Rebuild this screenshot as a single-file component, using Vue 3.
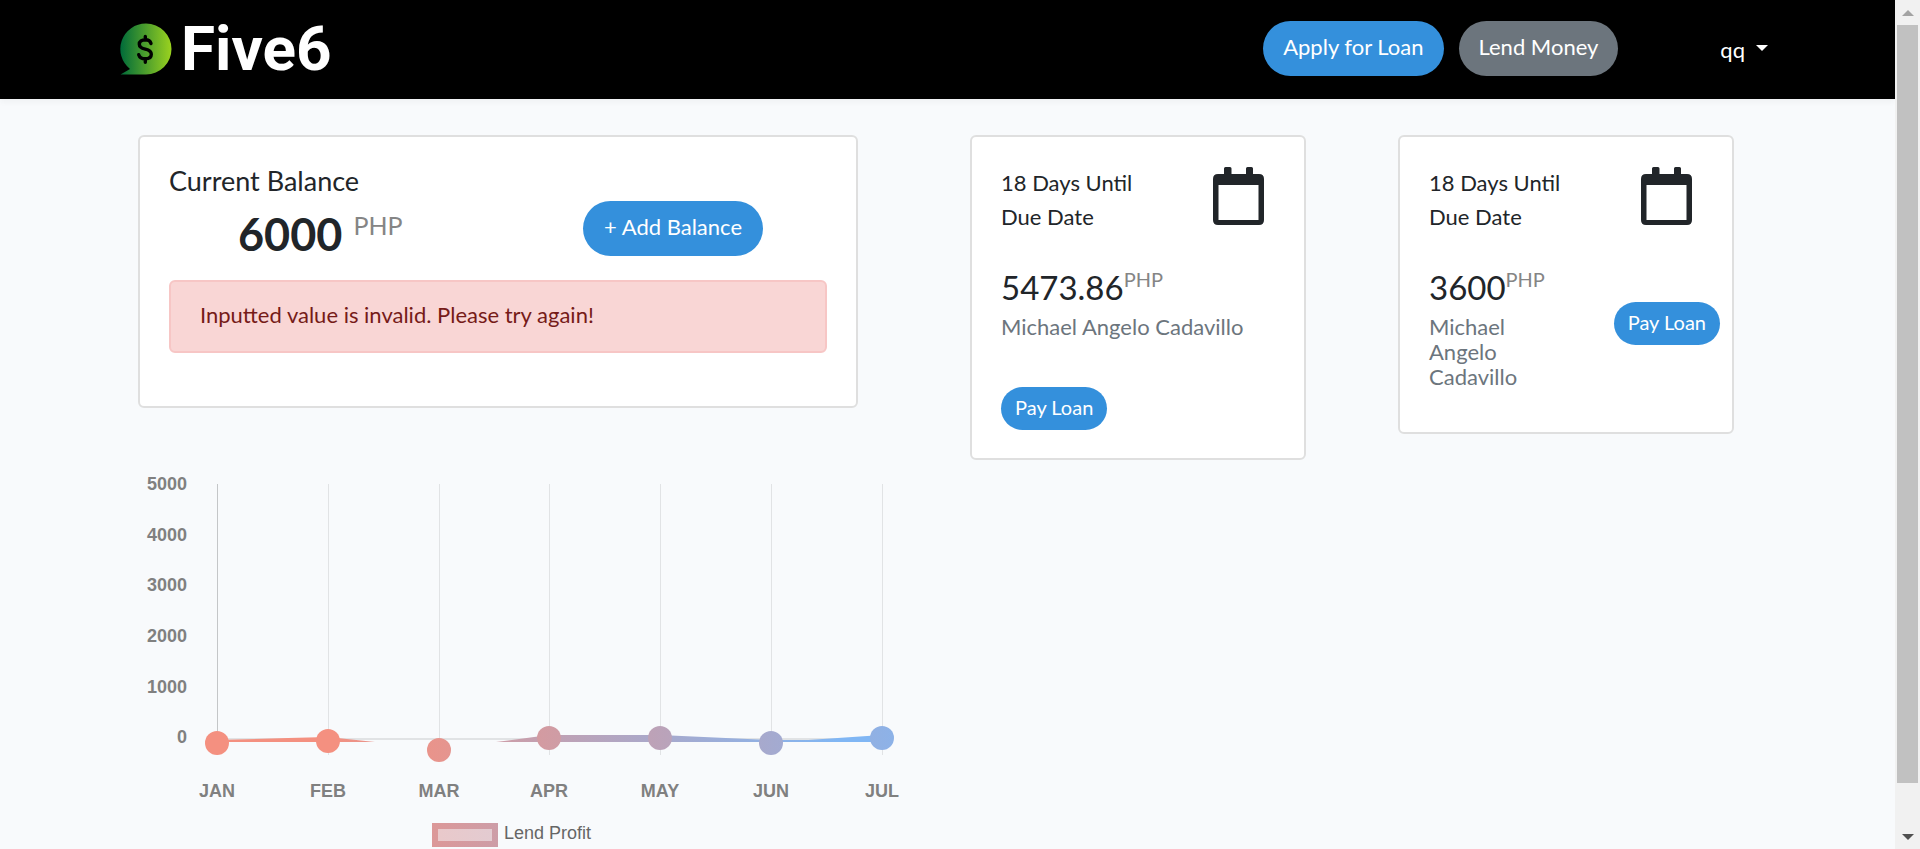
<script setup>
const loans = [
  { id: 1, days: 18, amount: '5473.86', lender: 'Michael Angelo Cadavillo', compact: false },
  { id: 2, days: 18, amount: '3600', lender: 'Michael Angelo Cadavillo', compact: true }
]

const ticks = [
  { label: '5000', y: 30 },
  { label: '4000', y: 81 },
  { label: '3000', y: 131 },
  { label: '2000', y: 182 },
  { label: '1000', y: 233 },
  { label: '0', y: 283 }
]

const points = [
  { label: 'JAN', x: 79, y: 289 },
  { label: 'FEB', x: 190, y: 287 },
  { label: 'MAR', x: 301, y: 296 },
  { label: 'APR', x: 411, y: 284 },
  { label: 'MAY', x: 522, y: 284 },
  { label: 'JUN', x: 633, y: 289 },
  { label: 'JUL', x: 744, y: 284 }
]
</script>

<template>
  <div class="shell">
    <div class="page">
      <header class="nav">
        <a class="brand" href="#" aria-label="Five6">
          <svg class="mark" viewBox="0 0 52 52" aria-hidden="true">
            <defs>
              <linearGradient id="leaf" x1="0" x2="1" y1="0" y2="0">
                <stop offset="0" stop-color="#006b3a" />
                <stop offset="1" stop-color="#9bd21f" />
              </linearGradient>
            </defs>
            <path fill="url(#leaf)" d="M26 .5A25.5 25.5 0 0 1 26 51.500H.5L10 46A25.500 25.500 0 0 1 26 .5Z" />
            <path
              d="M31 20.500C30.300 18 28.300 16.800 25.300 16.800C21.800 16.800 19.300 18.500 19.300 21.200C19.300 24 21.500 25.300 25.300 26.200C29.200 27.100 31.300 28.500 31.300 31.300C31.300 34.200 28.800 35.800 25.300 35.800C21.800 35.800 19.500 34.300 18.700 31.700M25.300 13.500V17M25.300 36V39.200"
              fill="none" stroke="#000" stroke-width="3.400" stroke-linecap="round" />
          </svg>
          <span class="word">Five6</span>
        </a>
        <nav class="actions">
          <button class="btn primary" type="button">Apply for Loan</button>
          <button class="btn muted" type="button">Lend Money</button>
          <button class="user" type="button">qq<i class="caret"></i></button>
        </nav>
      </header>

      <main class="board">
        <div class="overview">
          <section class="card balance">
            <h2>Current Balance</h2>
            <div class="funds">
              <div class="total"><strong>6000</strong><span>PHP</span></div>
              <button class="btn primary" type="button">+ Add Balance</button>
            </div>
            <p class="alert" role="alert">Inputted value is invalid. Please try again!</p>
          </section>

          <svg class="chart" viewBox="0 0 762 394" role="img" aria-label="Lend Profit by month">
            <defs>
              <linearGradient id="trend" gradientUnits="userSpaceOnUse" x1="187" x2="700" y1="0" y2="0">
                <stop offset="0" stop-color="#f49080" />
                <stop offset="1" stop-color="#80b6f4" />
              </linearGradient>
              <linearGradient id="dots" gradientUnits="userSpaceOnUse" x1="236" x2="819" y1="0" y2="0">
                <stop offset="0" stop-color="#f49080" />
                <stop offset="1" stop-color="#80b6f4" />
              </linearGradient>
            </defs>
            <rect v-for="(p, i) in points" :key="p.label" :x="p.x" y="30" width="1" height="271" :class="i ? 'rule' : 'axis'" />
            <rect x="79" y="284" width="665" height="2" class="zero" />
            <path
              fill="url(#trend)"
              d="M79 286L150 284L190 283L237 288H79ZM358 288L411 281H522L633 286L670 286L744 281V288Z" />
            <circle v-for="p in points" :key="p.label" :cx="p.x" :cy="p.y" r="12" fill="url(#dots)" />
            <text v-for="t in ticks" :key="t.label" x="49" :y="t.y + 6" text-anchor="end" class="tick">{{ t.label }}</text>
            <text v-for="p in points" :key="p.label" :x="p.x" y="343" text-anchor="middle" class="tick">{{ p.label }}</text>
            <rect x="297" y="372" width="60" height="18" fill="url(#trend)" fill-opacity=".5" />
            <rect x="297" y="372" width="60" height="18" fill="none" stroke="url(#trend)" stroke-width="6" />
            <text x="366" y="385" class="legend">Lend Profit</text>
          </svg>
        </div>

        <section v-for="loan in loans" :key="loan.id" class="card loan" :class="{ compact: loan.compact }">
          <div class="due">
            <h3>{{ loan.days }} Days Until Due Date</h3>
            <svg class="calendar" viewBox="0 0 51 58" aria-hidden="true">
              <path
                fill="#212529" fill-rule="evenodd"
                d="M11 7V1.500Q11 0 12.500 0H17Q18.500 0 18.500 1.500V7H33V1.500Q33 0 34.500 0H38.500Q40 0 40 1.500V7H46Q51 7 51 12V53Q51 58 46 58H5Q0 58 0 53V12Q0 7 5 7ZM5.500 18V53H45.500V18Z" />
            </svg>
          </div>
          <div class="pay">
            <div class="terms">
              <p class="amount">{{ loan.amount }}<span>PHP</span></p>
              <p class="lender">{{ loan.lender }}</p>
            </div>
            <button class="btn primary small" type="button">Pay Loan</button>
          </div>
        </section>
      </main>
    </div>

    <div class="scrollbar" aria-hidden="true">
      <svg viewBox="0 0 25 25"><path d="M7 16L13 10L19 16Z" fill="#a3a3a3" /></svg>
      <div class="thumb"></div>
      <svg class="down" viewBox="0 0 25 25"><path d="M7 10H19L13 16Z" fill="#505050" /></svg>
    </div>
  </div>
</template>

<style>
body {
  margin: 0;
  background: #f8fafc;
}
</style>

<style scoped>
.shell {
  display: grid;
  grid-template-columns: 1fr 25px;
  height: 100vh;
  overflow: hidden;
  color: #212529;
  font-family: Lato, "Liberation Sans", sans-serif;
  font-size: 22px;
}

.page {
  min-width: 0;
}

h2,
h3,
p {
  margin: 0;
  font-weight: 400;
}

.nav {
  display: flex;
  align-items: center;
  justify-content: space-between;
  box-sizing: border-box;
  height: 99px;
  padding: 0 127px 2px 120px;
  background: #000;
  box-shadow: 0 3px 6px rgba(0, 0, 0, 0.04);
}

.brand {
  display: flex;
  align-items: center;
  gap: 9px;
  color: #fff;
  text-decoration: none;
}

.mark {
  width: 52px;
  height: 52px;
}

.word {
  font-family: Roboto, sans-serif;
  font-size: 62px;
  font-weight: 700;
  line-height: 72px;
}

.actions {
  display: flex;
  align-items: center;
  gap: 15px;
}

.btn {
  box-sizing: border-box;
  height: 55px;
  padding: 0 20px 3px;
  border: 0;
  border-radius: 28px;
  color: #fff;
  font: inherit;
  line-height: 32px;
  white-space: nowrap;
}

.primary {
  background: #3490dc;
}

.muted {
  background: #6c757d;
}

.small {
  height: 43px;
  padding: 0 14px 3px;
  font-size: 20px;
}

.user {
  display: flex;
  align-items: center;
  gap: 11px;
  margin-left: 87px;
  padding: 2px 0 0;
  border: 0;
  background: none;
  color: #fff;
  font: inherit;
}

.caret {
  margin-bottom: 4px;
  border: 6px solid transparent;
  border-top-color: #fff;
  border-bottom: 0;
}

.board {
  display: grid;
  grid-template-columns: 762fr 406fr 428fr;
  align-items: start;
  padding: 36px 161px 0 138px;
}

.card {
  box-sizing: border-box;
  padding: 28px 29px;
  border: 2px solid #dfdfdf;
  border-radius: 6px;
  background: #fff;
}

.loan {
  margin-left: 70px;
}

.loan + .loan {
  margin-left: 92px;
}

.balance {
  height: 273px;
  margin-right: 42px;
}

h2 {
  font-size: 27px;
  line-height: 32px;
}

.funds {
  display: flex;
  align-items: center;
  justify-content: space-between;
  height: 63px;
  padding: 0 64px 0 69px;
}

.funds .btn {
  padding: 0 21px 3px;
}

.total {
  display: flex;
  align-items: flex-start;
  gap: 11px;
  padding-top: 10px;
}

.total strong {
  font-size: 45px;
  line-height: 72px;
}

.total span {
  color: #858585;
  font-size: 25px;
  line-height: 54px;
}

.alert {
  box-sizing: border-box;
  height: 73px;
  margin-top: 20px;
  padding: 16px 29px;
  border: 2px solid #f7c6c5;
  border-radius: 6px;
  background: #f9d6d5;
  color: #761b18;
  line-height: 34px;
}

.due {
  display: flex;
  justify-content: space-between;
  padding-right: 11px;
}

h3 {
  width: 150px;
  padding-top: 1px;
  font-size: 22px;
  line-height: 34px;
}

.calendar {
  width: 51px;
  height: 58px;
  margin-top: 2px;
}

.pay {
  margin-top: 31px;
}

.amount {
  display: flex;
  align-items: flex-start;
  font-size: 33px;
  line-height: 44px;
}

.amount span {
  color: #858585;
  font-size: 20px;
  line-height: 28px;
}

.lender {
  margin: 5px 0 48px;
  color: #6c757d;
  line-height: 25px;
}

.compact .pay {
  display: flex;
  align-items: flex-start;
  justify-content: space-between;
  margin-right: -17px;
}

.compact .terms {
  width: 120px;
}

.compact .lender {
  margin-bottom: 15px;
}

.compact .btn {
  margin-top: 37px;
}

.chart {
  display: block;
  width: 100%;
  margin-top: 46px;
}

.rule,
.zero {
  fill: #e1e3e5;
}

.axis {
  fill: #c4c6c8;
}

.tick {
  fill: #808080;
  font: 700 18px "Liberation Sans", sans-serif;
}

.legend {
  fill: #666;
  font: 18px "Liberation Sans", sans-serif;
}

.scrollbar {
  display: flex;
  flex-direction: column;
  background: #f1f1f1;
}

.scrollbar svg {
  flex: none;
  width: 25px;
  height: 25px;
}

.thumb {
  flex: 0 1 758px;
  margin: 0 2px;
  background: #c1c1c1;
}

.scrollbar .down {
  margin-top: auto;
}
</style>
